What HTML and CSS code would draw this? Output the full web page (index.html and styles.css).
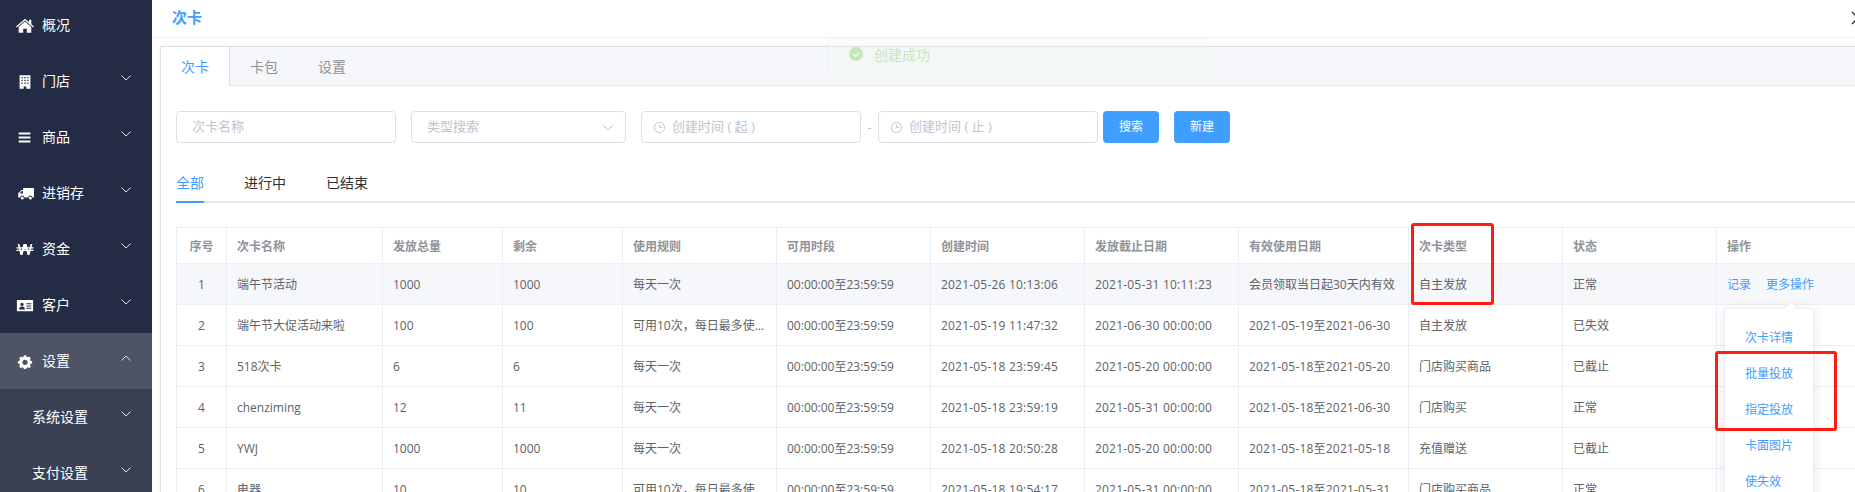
FILE: index.html
```html
<!DOCTYPE html>
<html lang="zh-CN">
<head>
<meta charset="utf-8">
<title>次卡</title>
<link rel="stylesheet" href="styles.css">
</head>
<body>
<aside class="sidebar">
  <ul class="menu">
    <li class="menu-item">
      <svg class="mi" viewBox="0 0 20 16"><path d="M10 .6 0 9.2l.9 1L10 2.4l9.100 7.800.9-1-3-2.600V1.500h-2.500v3L10 .6z"/><path d="M10 3.600 3 9.600V16h5v-4.500h4V16h5V9.600L10 3.600z"/></svg>
      <span class="ml">概况</span>
    </li>
    <li class="menu-item">
      <svg class="mi" viewBox="0 0 20 16"><path fill-rule="evenodd" d="M4 1h12v15h-4.500v-2.500h-3V16H4V1zm2 2v1.500h1.500V3H6zm3.200 0v1.500h1.600V3H9.200zm3.300 0v1.500H14V3h-1.500zM6 6v1.500h1.500V6H6zm3.200 0v1.500h1.600V6H9.200zm3.300 0v1.500H14V6h-1.500zM6 9v1.500h1.500V9H6zm3.200 0v1.500h1.600V9H9.200zm3.300 0v1.500H14V9h-1.500z"/></svg>
      <span class="ml">门店</span>
      <svg class="chev" viewBox="0 0 10 6"><path d="M.5.500 5 5 9.500.5"/></svg>
    </li>
    <li class="menu-item">
      <svg class="mi" viewBox="0 0 20 16"><path d="M3 2.500h13v2.200H3zM3 6.900h13v2.200H3zM3 11.300h13v2.200H3z"/></svg>
      <span class="ml">商品</span>
      <svg class="chev" viewBox="0 0 10 6"><path d="M.5.500 5 5 9.500.5"/></svg>
    </li>
    <li class="menu-item">
      <svg class="mi" viewBox="0 0 20 16"><path fill-rule="evenodd" d="M8 2h12v10.500h-1.600a2.400 2.400 0 0 0-4.800 0H9.400a2.400 2.400 0 0 0-4.800 0H2.500V7.800L6 4h2V2zM4 8h3.700V5.300H6.300L4 8z"/><circle cx="7" cy="13" r="1.700"/><circle cx="16" cy="13" r="1.700"/></svg>
      <span class="ml">进销存</span>
      <svg class="chev" viewBox="0 0 10 6"><path d="M.5.500 5 5 9.500.5"/></svg>
    </li>
    <li class="menu-item">
      <svg class="mi" viewBox="0 0 20 16"><path d="M1.800 2 5 14h2.200l1.700-6h2.200l1.700 6H15l3.200-12h-2l-2.200 8.500L11.800 2H8.200L6 10.500 3.800 2h-2z"/><path d="M.5 5.500h19v1.400H.5zM.5 8.300h19v1.400H.5z"/></svg>
      <span class="ml">资金</span>
      <svg class="chev" viewBox="0 0 10 6"><path d="M.5.500 5 5 9.500.5"/></svg>
    </li>
    <li class="menu-item">
      <svg class="mi mi-wide" viewBox="0 0 20 16"><path fill-rule="evenodd" d="M1 2h18v12.500H1V2zm5.700 3a1.800 1.800 0 1 0 0 3.600 1.800 1.800 0 0 0 0-3.600zM3.500 12.500h6.400c0-2-1-3.300-3.200-3.300s-3.200 1.300-3.200 3.300zM11.500 5.500v1.200h5.500V5.500h-5.500zm0 2.500v1.200h5.500V8h-5.500zm0 2.500v1.200h5.500v-1.200h-5.500z"/></svg>
      <span class="ml">客户</span>
      <svg class="chev" viewBox="0 0 10 6"><path d="M.5.500 5 5 9.500.5"/></svg>
    </li>
    <li class="menu-item is-open">
      <svg class="mi" viewBox="0 0 20 16"><path fill-rule="evenodd" d="M8.700 1h2.600l.4 1.800 1.300.6 1.600-1 1.900 1.900-1 1.600.6 1.300 1.800.4v2.600l-1.800.4-.6 1.300 1 1.600-1.900 1.900-1.600-1-1.300.6-.4 1.800H8.700l-.4-1.800-1.300-.6-1.600 1-1.900-1.900 1-1.600-.6-1.300-1.800-.4V7.600l1.800-.4.6-1.300-1-1.600 1.900-1.900 1.600 1 1.300-.6.400-1.800zM10 6a2.900 2.900 0 1 0 0 5.800A2.900 2.900 0 0 0 10 6z"/></svg>
      <span class="ml">设置</span>
      <svg class="chev" viewBox="0 0 10 6"><path d="M.5 5.500 5 1l4.500 4.500"/></svg>
    </li>
    <li class="menu-item sub">
      <span class="ml">系统设置</span>
      <svg class="chev" viewBox="0 0 10 6"><path d="M.5.500 5 5 9.500.5"/></svg>
    </li>
    <li class="menu-item sub">
      <span class="ml">支付设置</span>
      <svg class="chev" viewBox="0 0 10 6"><path d="M.5.500 5 5 9.500.5"/></svg>
    </li>
  </ul>
</aside>

<main class="main">
  <header class="topbar">
    <span class="topbar-title">次卡</span>
    <svg class="close" viewBox="0 0 14 14"><path d="M1 1l12 12M13 1 1 13"/></svg>
  </header>

  <section class="card">
    <div class="card-tabs">
      <span class="card-tab is-active">次卡</span>
      <span class="card-tab">卡包</span>
      <span class="card-tab">设置</span>
    </div>
    <div class="card-body">
      <div class="filters">
        <div class="field f-name"><span class="ph">次卡名称</span></div>
        <div class="field f-select">
          <span class="ph">类型搜索</span>
          <svg class="select-arrow" viewBox="0 0 12 7"><path d="M1 1l5 5 5-5"/></svg>
        </div>
        <div class="field f-date">
          <svg class="clock" viewBox="0 0 14 14"><circle cx="7" cy="7" r="5.500"/><path d="M7 3.800V7h3"/></svg>
          <span class="ph">创建时间 ( 起 )</span>
        </div>
        <span class="dash">-</span>
        <div class="field f-date">
          <svg class="clock" viewBox="0 0 14 14"><circle cx="7" cy="7" r="5.500"/><path d="M7 3.800V7h3"/></svg>
          <span class="ph">创建时间 ( 止 )</span>
        </div>
        <button class="btn btn-search">搜索</button>
        <button class="btn btn-new">新建</button>
      </div>

      <nav class="subtabs">
        <span class="subtab is-active">全部</span>
        <span class="subtab">进行中</span>
        <span class="subtab">已结束</span>
      </nav>

      <table class="grid">
        <colgroup>
          <col class="c-no"><col class="c-name"><col class="c-qty"><col class="c-qty"><col class="c-w"><col class="c-w"><col class="c-w"><col class="c-w"><col class="c-valid"><col class="c-w"><col class="c-w"><col class="c-w">
        </colgroup>
        <thead>
          <tr>
            <th class="center">序号</th><th>次卡名称</th><th>发放总量</th><th>剩余</th><th>使用规则</th><th>可用时段</th><th>创建时间</th><th>发放截止日期</th><th>有效使用日期</th><th>次卡类型</th><th>状态</th><th>操作</th>
          </tr>
        </thead>
        <tbody>
          <tr class="is-hover">
            <td class="center">1</td><td>端午节活动</td><td>1000</td><td>1000</td><td>每天一次</td><td>00:00:00至23:59:59</td><td class="dt">2021-05-26 10:13:06</td><td class="dt">2021-05-31 10:11:23</td><td>会员领取当日起30天内有效</td><td>自主发放</td><td>正常</td>
            <td><a class="op">记录</a><a class="op">更多操作</a></td>
          </tr>
          <tr>
            <td class="center">2</td><td>端午节大促活动来啦</td><td>100</td><td>100</td><td>可用10次，每日最多使用1次</td><td>00:00:00至23:59:59</td><td class="dt">2021-05-19 11:47:32</td><td class="dt">2021-06-30 00:00:00</td><td class="dt">2021-05-19至2021-06-30</td><td>自主发放</td><td>已失效</td><td></td>
          </tr>
          <tr>
            <td class="center">3</td><td>518次卡</td><td>6</td><td>6</td><td>每天一次</td><td>00:00:00至23:59:59</td><td class="dt">2021-05-18 23:59:45</td><td class="dt">2021-05-20 00:00:00</td><td class="dt">2021-05-18至2021-05-20</td><td>门店购买商品</td><td>已截止</td><td></td>
          </tr>
          <tr>
            <td class="center">4</td><td>chenziming</td><td>12</td><td>11</td><td>每天一次</td><td>00:00:00至23:59:59</td><td class="dt">2021-05-18 23:59:19</td><td class="dt">2021-05-31 00:00:00</td><td class="dt">2021-05-18至2021-06-30</td><td>门店购买</td><td>正常</td><td></td>
          </tr>
          <tr>
            <td class="center">5</td><td>YWJ</td><td>1000</td><td>1000</td><td>每天一次</td><td>00:00:00至23:59:59</td><td class="dt">2021-05-18 20:50:28</td><td class="dt">2021-05-20 00:00:00</td><td class="dt">2021-05-18至2021-05-18</td><td>充值赠送</td><td>已截止</td><td></td>
          </tr>
          <tr>
            <td class="center">6</td><td>电器</td><td>10</td><td>10</td><td>可用10次，每日最多使用1次</td><td>00:00:00至23:59:59</td><td class="dt">2021-05-18 19:54:17</td><td class="dt">2021-05-31 00:00:00</td><td class="dt">2021-05-18至2021-05-31</td><td>门店购买商品</td><td>正常</td><td></td>
          </tr>
        </tbody>
      </table>
    </div>
  </section>
</main>

<div class="toast">
  <svg class="toast-icon" viewBox="0 0 14 14"><circle cx="7" cy="7" r="7"/><path d="M4 7.200l2.200 2.200L10 5.400"/></svg>
  <span>创建成功</span>
</div>

<div class="popover">
  <span class="popover-arrow"></span>
  <a class="pop-item">次卡详情</a>
  <a class="pop-item">批量投放</a>
  <a class="pop-item">指定投放</a>
  <a class="pop-item">卡面图片</a>
  <a class="pop-item">使失效</a>
</div>

<div class="mark mark-type"></div>
<div class="mark mark-actions"></div>
</body>
</html>
```

FILE: styles.css
```css
* { box-sizing: border-box; }

html, body {
  margin: 0;
  height: 492px;
  overflow: hidden;
}

body {
  display: flex;
  background: #fff;
  font-family: "Open Sans", "Noto Sans CJK SC", sans-serif;
  font-size: 12px;
  color: #606266;
}

/* sidebar */
.sidebar {
  flex: 0 0 152px;
  height: 492px;
  overflow: hidden;
  background: #242c45;
  color: #fff;
}

.menu {
  list-style: none;
  margin: -3px 0 0;
  padding: 0;
}

.menu-item {
  display: flex;
  align-items: center;
  height: 56px;
  padding: 0 20px 0 16px;
  font-size: 14px;
}

.menu-item.is-open { background: #4e5466; }

.menu-item.sub {
  background: #3a4155;
  padding-left: 32px;
}

.mi {
  flex: 0 0 18px;
  width: 18px;
  height: 15px;
  margin-right: 8px;
  fill: #fff;
}

.ml {
  flex: 1;
  line-height: 18px;
  padding-bottom: 1px;
}

.chev {
  flex: 0 0 10px;
  width: 10px;
  height: 6px;
  margin: -6px 1px 0 0;
  fill: none;
  stroke: #dfe2ea;
  stroke-width: 1;
}

/* main */
.main {
  flex: 1;
  min-width: 0;
  height: 492px;
  overflow: hidden;
}

.topbar {
  display: flex;
  justify-content: space-between;
  align-items: center;
  height: 38px;
  padding: 0 0 5px 20px;
  border-bottom: 1px solid #ebeef5;
  overflow: hidden;
}

.topbar-title {
  font-size: 15px;
  font-weight: 700;
  color: #409eff;
}

.close {
  flex: 0 0 14px;
  width: 14px;
  height: 14px;
  margin: 4px -10px 0 0;
  fill: none;
  stroke: #303133;
  stroke-width: 1.300;
}

.card {
  margin: 8px 0 0 8px;
  width: 1800px;
  border: 1px solid #dcdfe6;
  border-right: 0;
  box-shadow: 0 0 3px rgba(0, 0, 0, .08);
  background: #fff;
}

.card-tabs {
  display: flex;
  height: 39px;
  background: #f5f7fa;
  border-bottom: 1px solid #e4e7ed;
}

.card-tab {
  width: 68px;
  height: 39px;
  line-height: 40px;
  text-align: center;
  font-size: 14px;
  color: #909399;
}

.card-tab.is-active {
  width: 69px;
  color: #409eff;
  background: #fff;
  border-right: 1px solid #dcdfe6;
}

.card-body { padding: 25px 0 0 15px; }

/* filters */
.filters {
  display: flex;
  align-items: center;
  height: 32px;
}

.field {
  display: flex;
  align-items: center;
  height: 32px;
  padding: 0 15px;
  border: 1px solid #dcdfe6;
  border-radius: 4px;
  font-size: 13px;
}

.f-name { width: 220px; margin-right: 15px; }
.f-select { width: 215px; margin-right: 15px; justify-content: space-between; padding-right: 11px; }
.f-date { width: 220px; padding-left: 11px; }

.ph {
  padding-bottom: 3px;
  color: #c0c4cc;
}

.select-arrow {
  width: 12px;
  height: 7px;
  fill: none;
  stroke: #c0c4cc;
  stroke-width: 1;
}

.clock {
  width: 13px;
  height: 13px;
  margin-right: 6px;
  fill: none;
  stroke: #c0c4cc;
  stroke-width: 1;
}

.dash {
  width: 17px;
  text-align: center;
  color: #c0c4cc;
  font-size: 13px;
}

.btn {
  width: 56px;
  height: 32px;
  padding: 0 0 2px;
  border: 0;
  border-radius: 4px;
  background: #409eff;
  color: #fff;
  font: inherit;
}

.btn-search { margin-left: 5px; }
.btn-new { margin-left: 15px; }

/* sub tabs */
.subtabs {
  display: flex;
  gap: 40px;
  height: 60px;
  margin-top: 0;
  padding-top: 30px;
  border-bottom: 2px solid #e4e7ed;
  font-size: 14px;
  color: #303133;
}

.subtab {
  height: 30px;
  line-height: 20px;
}

.subtab.is-active {
  color: #409eff;
  border-bottom: 2px solid #409eff;
}

/* table */
.grid {
  width: 1695px;
  margin-top: 24px;
  border-collapse: collapse;
  table-layout: fixed;
}

.c-no { width: 50px; }
.c-name { width: 156px; }
.c-qty { width: 120px; }
.c-w { width: 154px; }
.c-valid { width: 170px; }

.grid th,
.grid td {
  padding: 0 10px;
  border: 1px solid #ebeef5;
  text-align: left;
  white-space: nowrap;
  overflow: hidden;
  text-overflow: ellipsis;
}

.grid th {
  height: 36px;
  font-weight: 700;
  color: #909399;
}

.grid td { height: 41px; }

.grid .center { text-align: center; }

.grid .dt { letter-spacing: .2px; }

.is-hover td { background: #f5f7fa; }

.op {
  margin-right: 15px;
  color: #409eff;
}

/* overlays */
.toast {
  position: absolute;
  left: 827px;
  top: 37px;
  display: flex;
  align-items: flex-start;
  width: 380px;
  height: 40px;
  padding: 8px 0 0 21px;
  border: 1px solid #e1f3d8;
  border-radius: 4px;
  background: #f0f9eb;
  color: #67c23a;
  font-size: 14px;
  line-height: 17px;
  opacity: .33;
}

.toast-icon {
  width: 14px;
  height: 14px;
  margin: 1px 11px 0 0;
  fill: #67c23a;
}

.toast-icon path {
  fill: none;
  stroke: #fff;
  stroke-width: 1.200;
}

.popover {
  position: absolute;
  left: 1724px;
  top: 308px;
  display: flex;
  flex-direction: column;
  width: 90px;
  height: 200px;
  padding: 11px 0 0 20px;
  border: 1px solid #ebeef5;
  border-radius: 4px;
  background: #fff;
  box-shadow: 0 2px 12px rgba(0, 0, 0, .1);
}

.pop-item {
  height: 36px;
  line-height: 36px;
  color: #409eff;
}

.popover-arrow {
  position: absolute;
  left: 61px;
  top: -6px;
  width: 10px;
  height: 10px;
  background: #fff;
  transform: rotate(45deg);
  border-top: 1px solid #ebeef5;
  border-left: 1px solid #ebeef5;
}

.mark {
  position: absolute;
  border: 3px solid #ff1d12;
  border-radius: 3px;
}

.mark-type { left: 1411px; top: 223px; width: 83px; height: 82px; }
.mark-actions { left: 1715px; top: 351px; width: 122px; height: 80px; }
```
